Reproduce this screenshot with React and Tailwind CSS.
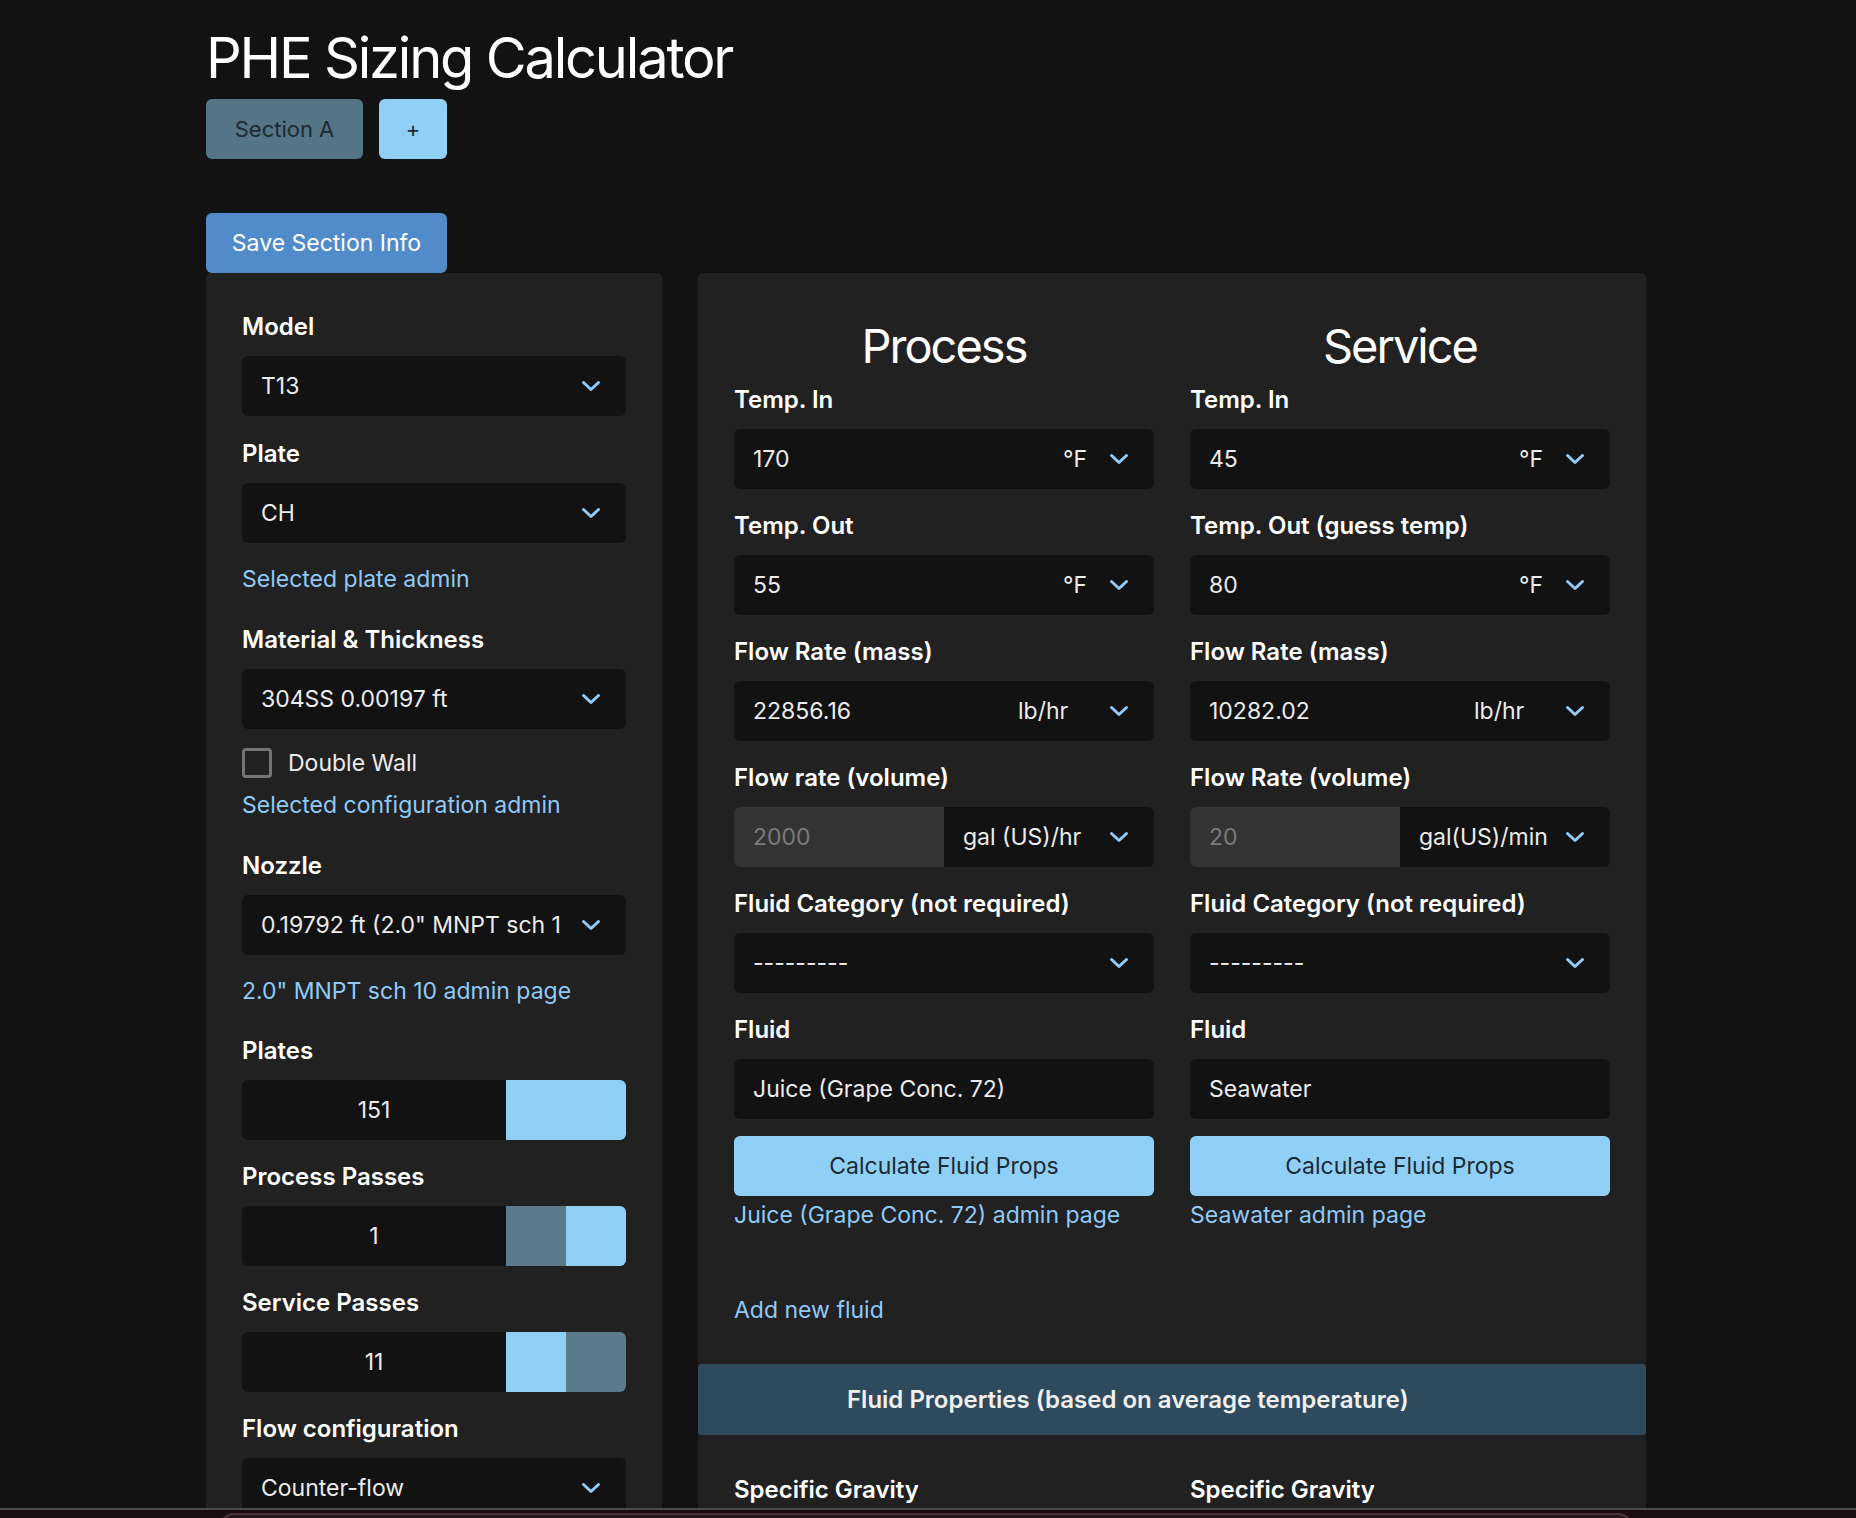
import React from "react";

const FONT = { fontFamily: 'Inter, "Noto Sans", "Liberation Sans", sans-serif' };

function Chevron() {
  return (
    <svg width="20" height="12" viewBox="0 0 20 12" className="shrink-0">
      <path d="M2.5 2.5 L10 9.5 L17.5 2.5" fill="none" stroke="#90caf9" strokeWidth="3" strokeLinecap="round" strokeLinejoin="round" />
    </svg>
  );
}

function Label({ children, first }) {
  return (
    <div className={`${first ? "mt-[11px]" : "mt-[22px]"} mb-[14px] text-[24px] leading-[30px] font-semibold text-white whitespace-nowrap`}>
      {children}
    </div>
  );
}

function Select({ value }) {
  return (
    <div className="h-[60px] rounded-[6px] bg-[#121212] flex items-center pl-[19px] pr-[25px]">
      <span className="flex-1 text-[23px] leading-[28px] text-[#ececec] whitespace-nowrap overflow-hidden">{value}</span>
      <Chevron />
    </div>
  );
}

function UnitInput({ value, unit, unitW }) {
  return (
    <div className="h-[60px] rounded-[6px] bg-[#121212] flex items-center">
      <span className="flex-1 pl-[19px] text-[23px] leading-[28px] text-[#ececec]">{value}</span>
      <div className={`${unitW} h-full flex items-center pl-[19px] pr-[25px]`}>
        <span className="flex-1 text-[23px] leading-[28px] text-[#ececec] whitespace-nowrap">{unit}</span>
        <Chevron />
      </div>
    </div>
  );
}

function VolInput({ value, unit }) {
  return (
    <div className="h-[60px] rounded-[6px] bg-[#121212] flex overflow-hidden">
      <div className="w-[210px] h-full bg-[#333333] flex items-center pl-[19px] text-[23px] leading-[28px] text-[#7a7a7a]">{value}</div>
      <div className="flex-1 h-full flex items-center pl-[19px] pr-[25px]">
        <span className="flex-1 text-[23px] leading-[28px] text-[#ececec] whitespace-nowrap">{unit}</span>
        <Chevron />
      </div>
    </div>
  );
}

function TextInput({ value }) {
  return (
    <div className="h-[60px] rounded-[6px] bg-[#121212] flex items-center pl-[19px] text-[23px] leading-[28px] text-[#ececec]">
      {value}
    </div>
  );
}

function Stepper({ value, left, right }) {
  return (
    <div className="h-[60px] rounded-[6px] bg-[#121212] flex overflow-hidden">
      <div className="w-[264px] flex items-center justify-center text-[23px] leading-[28px] text-[#ececec]">{value}</div>
      <div className={`w-[60px] h-full ${left}`} />
      <div className={`w-[60px] h-full ${right}`} />
    </div>
  );
}

function LinkText({ children, className = "" }) {
  return <div className={`text-[23px] leading-[28px] text-[#90caf9] whitespace-nowrap ${className}`}>{children}</div>;
}

function Column({ title, tIn, tOutLabel, tOut, mass, volLabel, vol, volUnit, fluid, adminLink }) {
  return (
    <div className="flex flex-col">
      <h2 className="text-[47px] leading-[56px] font-normal tracking-[-2px] text-center text-white">{title}</h2>
      <Label first>Temp. In</Label>
      <UnitInput value={tIn} unit="°F" unitW="w-[110px]" />
      <Label>{tOutLabel}</Label>
      <UnitInput value={tOut} unit="°F" unitW="w-[110px]" />
      <Label>Flow Rate (mass)</Label>
      <UnitInput value={mass} unit="lb/hr" unitW="w-[155px]" />
      <Label>{volLabel}</Label>
      <VolInput value={vol} unit={volUnit} />
      <Label>Fluid Category (not required)</Label>
      <Select value="---------" />
      <Label>Fluid</Label>
      <TextInput value={fluid} />
      <button className="mt-[17px] h-[60px] rounded-[6px] bg-[#90d0f6] text-[23px] leading-[28px] text-[#1c2a33]">
        Calculate Fluid Props
      </button>
      <LinkText className="mt-[5px]">{adminLink}</LinkText>
    </div>
  );
}

export default function App() {
  return (
    <div className="relative h-[1518px] overflow-hidden bg-[#121212] text-white" style={FONT}>
      <div className="ml-[206px] w-[1440px] pt-[25px]">
        <h1 className="text-[56px] leading-[67px] font-normal tracking-[-2.2px] text-white">PHE Sizing Calculator</h1>
        <div className="mt-[7px] flex gap-[16px]">
          <button className="h-[60px] w-[157px] rounded-[6px] bg-[#537586] text-[22px] leading-[28px] text-[#1e2a31]">Section A</button>
          <button className="h-[60px] w-[68px] rounded-[6px] bg-[#90d0f6] text-[22px] leading-[28px] text-[#1e2a31]">+</button>
        </div>
        <button className="mt-[54px] h-[60px] w-[241px] rounded-[6px] bg-[#528bca] text-[23px] leading-[28px] text-white">
          Save Section Info
        </button>
        <div className="flex gap-[36px] items-start">
          <div className="w-[456px] rounded-[5px] bg-[#212121] px-[36px] pt-[28px] pb-[40px]">
            <Label first>Model</Label>
            <Select value="T13" />
            <div className="mt-[23px] mb-[14px] text-[24px] leading-[30px] font-semibold">Plate</div>
            <Select value="CH" />
            <LinkText className="mt-[22px]">Selected plate admin</LinkText>
            <div className="mt-[32px] mb-[14px] text-[24px] leading-[30px] font-semibold">Material &amp; Thickness</div>
            <Select value="304SS 0.00197 ft" />
            <div className="mt-[19px] flex items-center gap-[16px]">
              <div className="w-[30px] h-[30px] rounded-[4px] border-[3px] border-[#757575]" />
              <span className="text-[23px] leading-[28px] text-[#ececec]">Double Wall</span>
            </div>
            <LinkText className="mt-[13px]">Selected configuration admin</LinkText>
            <div className="mt-[32px] mb-[14px] text-[24px] leading-[30px] font-semibold">Nozzle</div>
            <Select value={'0.19792 ft (2.0" MNPT sch 1'} />
            <LinkText className="mt-[22px]">2.0" MNPT sch 10 admin page</LinkText>
            <div className="mt-[31px] mb-[14px] text-[24px] leading-[30px] font-semibold">Plates</div>
            <Stepper value="151" left="bg-[#90d0f6]" right="bg-[#90d0f6]" />
            <Label>Process Passes</Label>
            <Stepper value="1" left="bg-[#5b7a8b]" right="bg-[#90d0f6]" />
            <Label>Service Passes</Label>
            <Stepper value="11" left="bg-[#90d0f6]" right="bg-[#5b7a8b]" />
            <Label>Flow configuration</Label>
            <Select value="Counter-flow" />
          </div>
          <div className="w-[948px] rounded-[5px] bg-[#212121] pt-[45px] pb-[40px]">
            <div className="grid grid-cols-2 gap-x-[36px] px-[36px]">
              <Column
                title="Process"
                tIn="170"
                tOutLabel="Temp. Out"
                tOut="55"
                mass="22856.16"
                volLabel="Flow rate (volume)"
                vol="2000"
                volUnit="gal (US)/hr"
                fluid="Juice (Grape Conc. 72)"
                adminLink="Juice (Grape Conc. 72) admin page"
              />
              <Column
                title="Service"
                tIn="45"
                tOutLabel="Temp. Out (guess temp)"
                tOut="80"
                mass="10282.02"
                volLabel="Flow Rate (volume)"
                vol="20"
                volUnit="gal(US)/min"
                fluid="Seawater"
                adminLink="Seawater admin page"
              />
            </div>
            <div className="px-[36px]">
              <LinkText className="mt-[67px]">Add new fluid</LinkText>
            </div>
            <div className="mt-[40px] h-[71px] rounded-[4px] bg-[#2f4a5c] flex items-center pl-[149px] text-[24px] leading-[30px] font-semibold text-[#f0f0f0]">
              Fluid Properties (based on average temperature)
            </div>
            <div className="mt-[40px] grid grid-cols-2 gap-x-[36px] px-[36px]">
              <div className="text-[24px] leading-[30px] font-semibold">Specific Gravity</div>
              <div className="text-[24px] leading-[30px] font-semibold">Specific Gravity</div>
            </div>
          </div>
        </div>
      </div>
      <div className="absolute left-0 right-0 bottom-0 h-[10px] bg-[#1a0c10] border-t-[2px] border-[#4a4a4a] overflow-hidden">
        <div className="absolute left-[220px] w-[1412px] top-[3px] h-[20px] rounded-t-[14px] border-[2px] border-[#4e3438] bg-[#24161a]" />
      </div>
    </div>
  );
}
